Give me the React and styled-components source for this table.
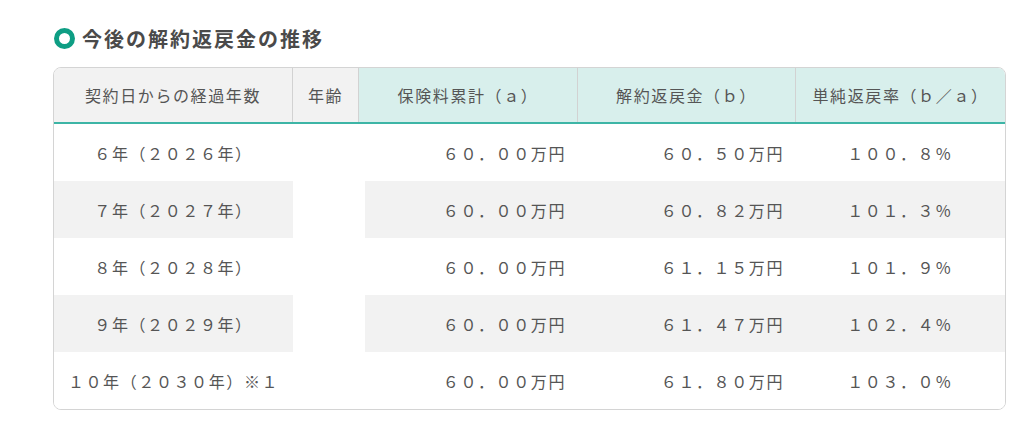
import React from "react";
import styled, { createGlobalStyle } from "styled-components";

const Global = createGlobalStyle`
  html, body { margin: 0; padding: 0; background: #fff; }
  body { font-family: "Noto Sans CJK JP", "Noto Sans", sans-serif; color: #555; }
`;

const Page = styled.div`
  padding: 26px 17px 0 53px;
`;

const Title = styled.h2`
  display: flex;
  align-items: center;
  gap: 7px;
  margin: 0 0 17px 1px;
  height: 24px;
  font-size: 20px;
  font-weight: 700;
  letter-spacing: 0.1em;
  color: #4a4a4a;
`;

const Ring = styled.span`
  display: inline-block;
  box-sizing: border-box;
  width: 21px;
  height: 21px;
  border: 5px solid #0e9e84;
  border-radius: 50%;
  flex: none;
`;

const Table = styled.div`
  width: 951px;
  border: 1px solid #d4d4d4;
  border-radius: 8px;
  overflow: hidden;
`;

const Head = styled.div`
  display: grid;
  grid-template-columns: 238px 66px 219px 218px 1fr;
  border-bottom: 2px solid #3db5a6;
`;

const HeadCell = styled.div`
  height: 54px;
  display: flex;
  align-items: center;
  justify-content: center;
  font-size: 16px;
  letter-spacing: 0.1em;
  color: #555;
  background: ${(p) => (p.$teal ? "#d8efec" : "#f2f2f2")};
  border-left: ${(p) => (p.$first ? "none" : "1px solid #d2d2d2")};
`;

const Body = styled.div`
  display: grid;
  grid-template-columns: 239px 72px 212px 218px 1fr;
  grid-auto-rows: 57px;
`;

const AgeCell = styled.div`
  grid-column: 2;
  grid-row: 1 / span 5;
  background: #fff;
`;

const Cell = styled.div`
  display: flex;
  align-items: center;
  justify-content: ${(p) => p.$align || "center"};
  padding-right: ${(p) => (p.$align === "flex-end" ? "11px" : "0")};
  font-size: 16px;
  letter-spacing: 0.1em;
  color: #555;
  white-space: nowrap;
  background: ${(p) => (p.$stripe ? "#f2f2f2" : "#fff")};
`;

const rows = [
  ["６年（２０２６年）", "６０．００万円", "６０．５０万円", "１００．８％"],
  ["７年（２０２７年）", "６０．００万円", "６０．８２万円", "１０１．３％"],
  ["８年（２０２８年）", "６０．００万円", "６１．１５万円", "１０１．９％"],
  ["９年（２０２９年）", "６０．００万円", "６１．４７万円", "１０２．４％"],
  ["１０年（２０３０年）※１", "６０．００万円", "６１．８０万円", "１０３．０％"],
];

export default function App() {
  return (
    <>
      <Global />
      <Page>
        <Title>
          <Ring />
          今後の解約返戻金の推移
        </Title>
        <Table>
          <Head>
            <HeadCell $first>契約日からの経過年数</HeadCell>
            <HeadCell>年齢</HeadCell>
            <HeadCell $teal>保険料累計（ａ）</HeadCell>
            <HeadCell $teal>解約返戻金（ｂ）</HeadCell>
            <HeadCell $teal>単純返戻率（ｂ／ａ）</HeadCell>
          </Head>
          <Body>
            <AgeCell />
            {rows.map((r, i) => {
              const s = i % 2 === 1;
              return (
                <React.Fragment key={i}>
                  <Cell $stripe={s} style={{ gridRow: i + 1, gridColumn: 1 }}>{r[0]}</Cell>
                  <Cell $stripe={s} $align="flex-end" style={{ gridRow: i + 1, gridColumn: 3 }}>{r[1]}</Cell>
                  <Cell $stripe={s} $align="flex-end" style={{ gridRow: i + 1, gridColumn: 4 }}>{r[2]}</Cell>
                  <Cell $stripe={s} style={{ gridRow: i + 1, gridColumn: 5 }}>{r[3]}</Cell>
                </React.Fragment>
              );
            })}
          </Body>
        </Table>
      </Page>
    </>
  );
}
